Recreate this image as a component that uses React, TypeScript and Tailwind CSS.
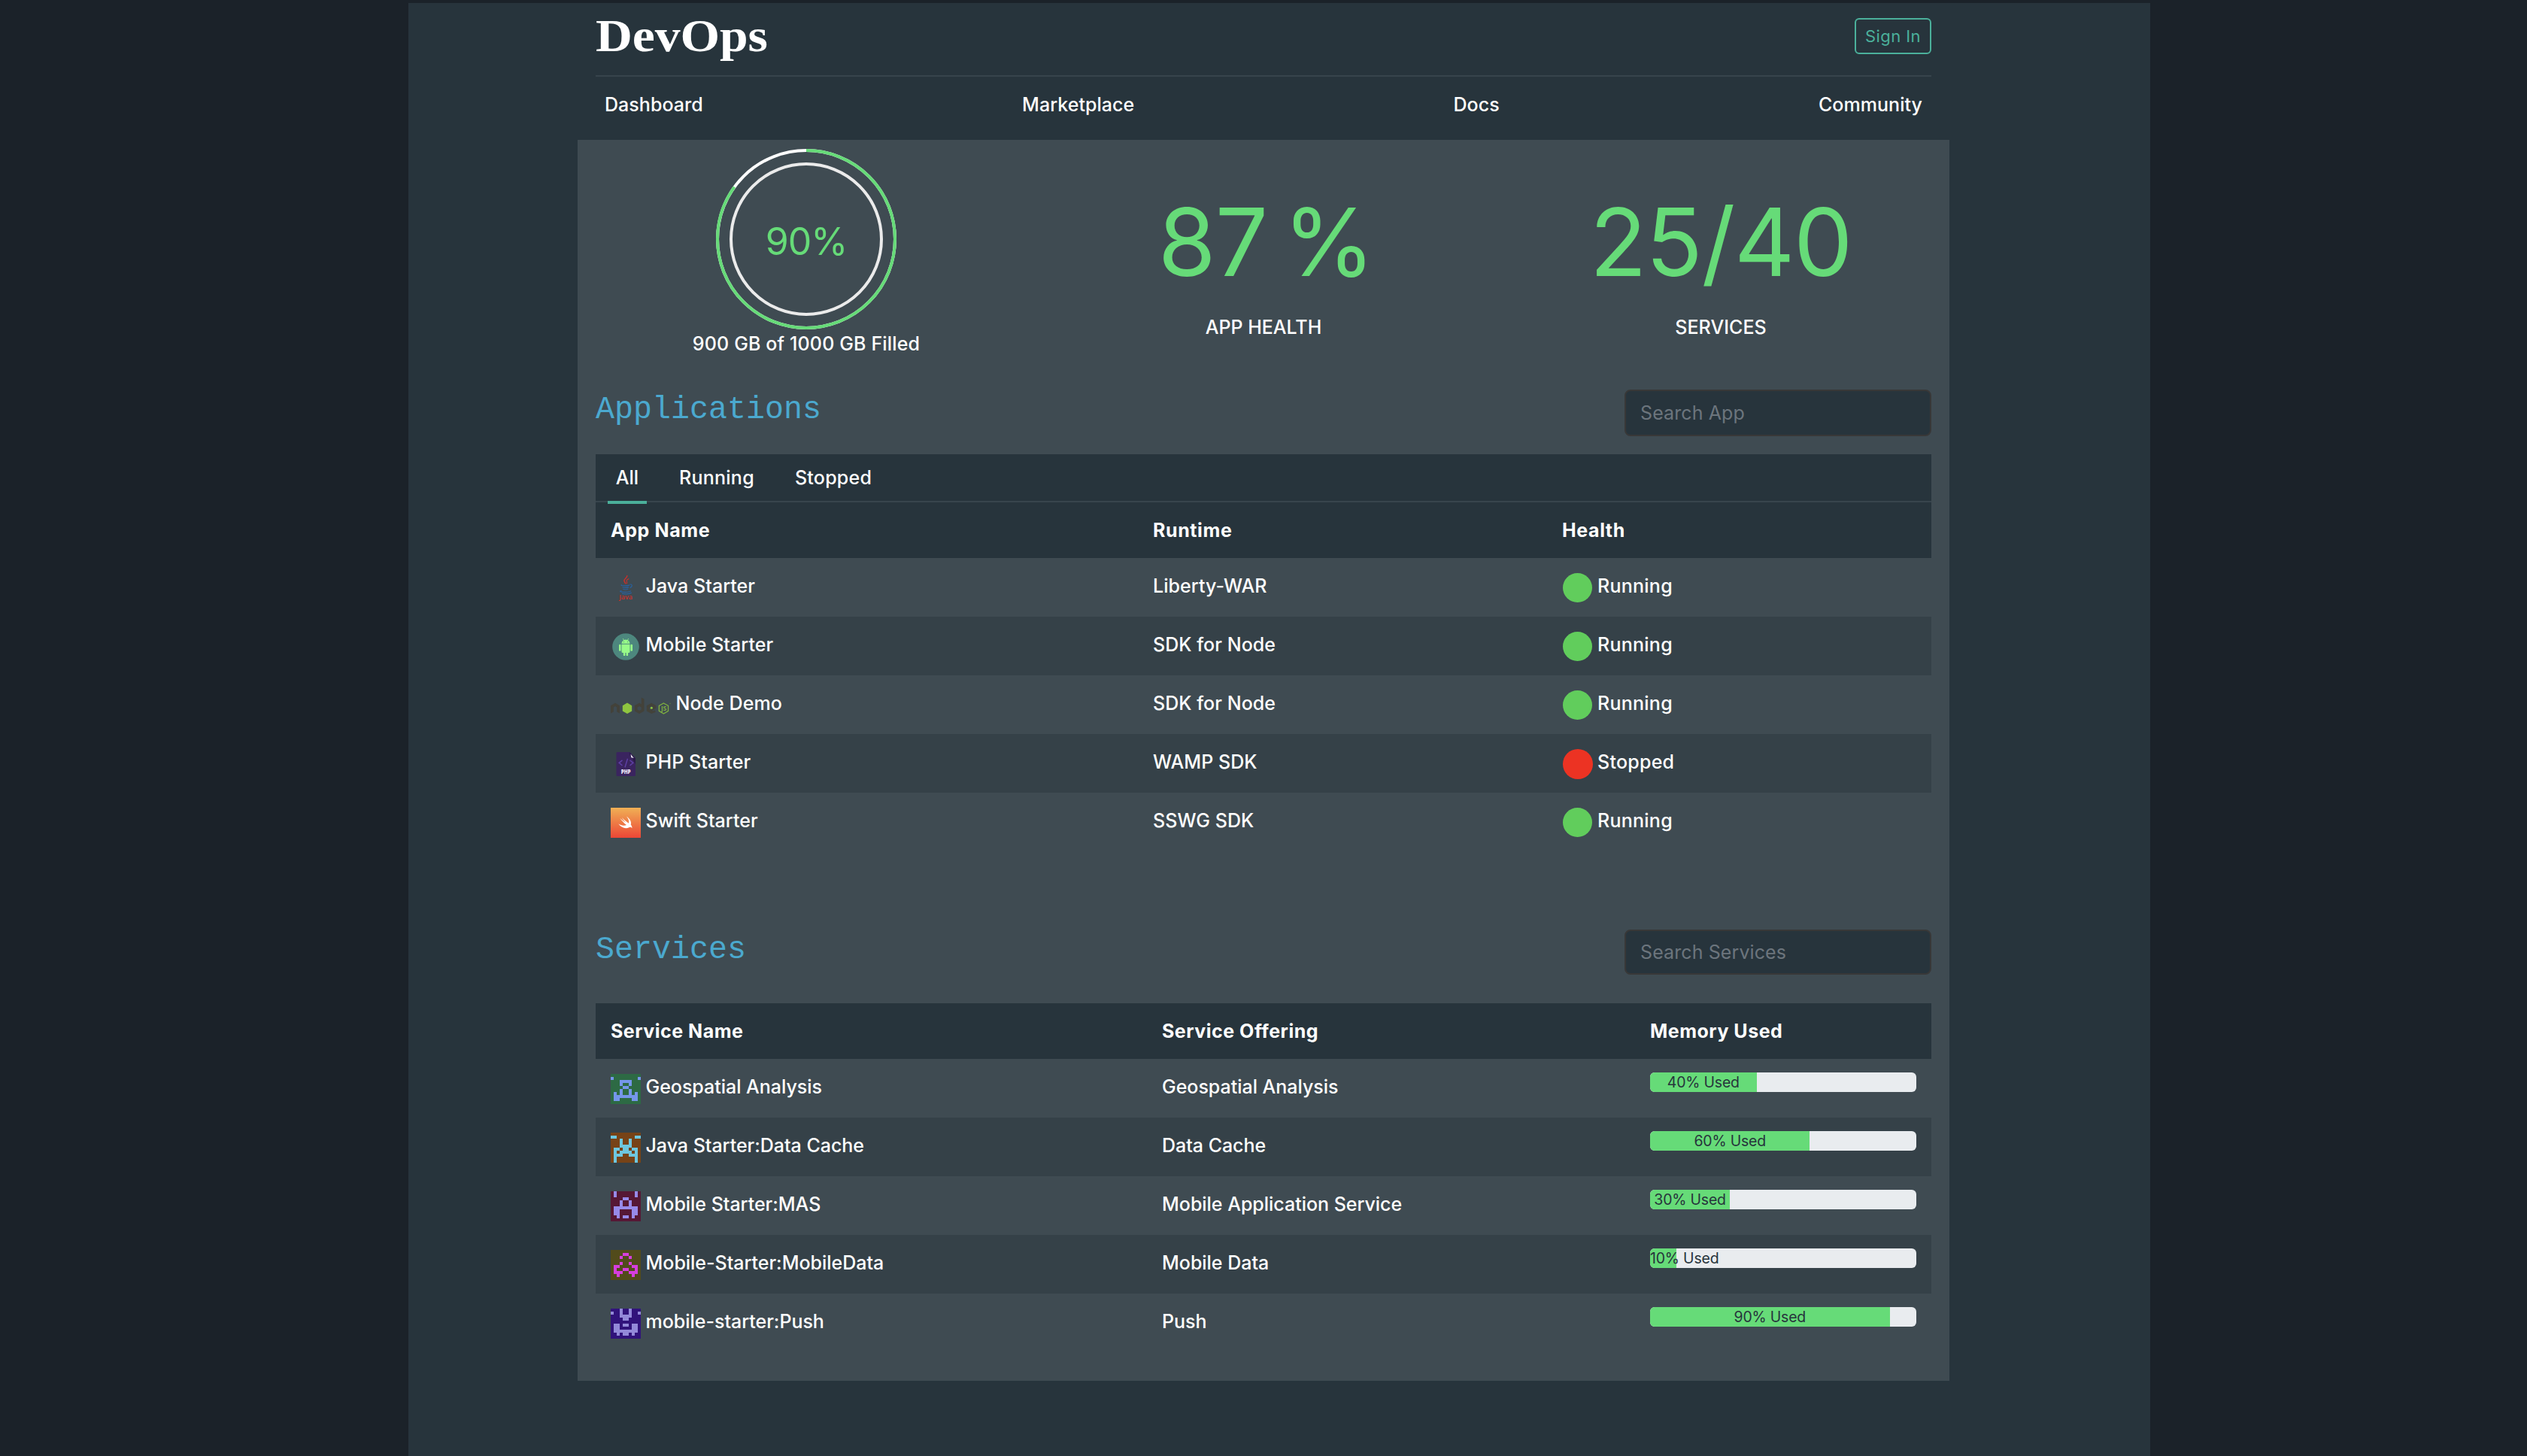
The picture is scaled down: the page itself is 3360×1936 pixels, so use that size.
import React from "react";

type IconKind = "java" | "android" | "node" | "php" | "swift";

const apps: { icon: IconKind; name: string; runtime: string; health: "Running" | "Stopped" }[] = [
  { icon: "java", name: "Java Starter", runtime: "Liberty-WAR", health: "Running" },
  { icon: "android", name: "Mobile Starter", runtime: "SDK for Node", health: "Running" },
  { icon: "node", name: "Node Demo", runtime: "SDK for Node", health: "Running" },
  { icon: "php", name: "PHP Starter", runtime: "WAMP SDK", health: "Stopped" },
  { icon: "swift", name: "Swift Starter", runtime: "SSWG SDK", health: "Running" },
];

interface Sprite {
  bg: string;
  fg: string;
  rows: string[];
}

const services: { name: string; offering: string; used: number; sprite: Sprite }[] = [
  {
    name: "Geospatial Analysis",
    offering: "Geospatial Analysis",
    used: 40,
    sprite: {
      bg: "#2d6a44",
      fg: "#7596ea",
      rows: [
        "..........",
        "#........#",
        "...####...",
        "...#..#...",
        "....##....",
        "...#..#...",
        ".#.#..#.#.",
        ".########.",
        ".##....##.",
        "..........",
      ],
    },
  },
  {
    name: "Java Starter:Data Cache",
    offering: "Data Cache",
    used: 60,
    sprite: {
      bg: "#774317",
      fg: "#6ec7df",
      rows: [
        "..........",
        "##......##",
        "...#..#...",
        "...#..#...",
        "...####...",
        ".##.##.##.",
        ".#.####.#.",
        ".###..###.",
        ".#......#.",
        ".#......#.",
      ],
    },
  },
  {
    name: "Mobile Starter:MAS",
    offering: "Mobile Application Service",
    used: 30,
    sprite: {
      bg: "#561835",
      fg: "#978ae9",
      rows: [
        ".#......#.",
        ".#......#.",
        "....##....",
        "...#..#...",
        "...#..#...",
        ".########.",
        ".##....##.",
        ".##....##.",
        "..#.##.#..",
        "..........",
      ],
    },
  },
  {
    name: "Mobile-Starter:MobileData",
    offering: "Mobile Data",
    used: 10,
    sprite: {
      bg: "#524b1b",
      fg: "#d63edd",
      rows: [
        "..........",
        "....##....",
        "...#..#...",
        "..........",
        "...#..#...",
        ".##....##.",
        ".#..##..#.",
        ".###..###.",
        "..#....#..",
        "..........",
      ],
    },
  },
  {
    name: "mobile-starter:Push",
    offering: "Push",
    used: 90,
    sprite: {
      bg: "#31137b",
      fg: "#9389d9",
      rows: [
        "...#..#...",
        "#..#..#..#",
        "...####...",
        "....##....",
        "..........",
        ".##.##.##.",
        ".##....##.",
        ".########.",
        "..#.##.#..",
        "..........",
      ],
    },
  },
];

function AppIcon({ kind }: { kind: IconKind }) {
  if (kind === "java")
    return (
      <svg className="mt-5 h-10 w-10 shrink-0" viewBox="0 0 40 40" fill="none">
        <path d="M21.8 3c1 3.400-4.600 4.600-3.800 7.600.4 1.500 1.700 2.400 2 3.800" stroke="#c8302b" strokeWidth="1.500" />
        <path d="M24.300 7.400c-2.700 1.200-4 2.400-2.900 4.100.6 1 .5 1.700-.3 2.600" stroke="#c8302b" strokeWidth="1.100" />
        <path d="M14.800 15.600c-1.500.6-1 1.300 4.200 1.300 3.200 0 5-.4 6-.8" stroke="#28619f" strokeWidth="1.200" />
        <path d="M25.300 15.200c3.600-.9 4.200 2.800.2 4.200" stroke="#28619f" strokeWidth="1.100" />
        <path d="M15.600 18.800c1.500.8 6.500.8 8.400.1M16.400 21.300c1.500.7 5 .7 6.800 0" stroke="#28619f" strokeWidth="1.200" />
        <path d="M14.500 23.500c-3.500.3-2.500 1.900 4.500 1.900 5.500 0 8.300-.9 7-1.900M15 27.400c4.500.7 10.500.4 12.800-1.400" stroke="#28619f" strokeWidth="1.100" />
        <text x="11.200" y="34.600" fill="#c8302b" fontSize="9.600" fontWeight="600" letterSpacing="0" fontFamily="Open Sans, sans-serif" textLength="17.600" lengthAdjust="spacingAndGlyphs">
          Java
        </text>
      </svg>
    );
  if (kind === "android")
    return (
      <svg className="mt-5 h-10 w-10 shrink-0" viewBox="0 0 40 40">
        <circle cx="20" cy="20" r="17.800" fill="#4d877e" />
        <g fill="#98fb89">
          <path d="M14.500 15.700a5.500 5.200 0 0 1 11 0z" />
          <path d="M16.300 9l1.600 2.700M23.700 9l-1.600 2.700" stroke="#98fb89" strokeWidth="0.800" />
          <path d="M14.500 16.700h11v9.800a1.500 1.500 0 0 1-1.500 1.500h-8a1.500 1.500 0 0 1-1.500-1.500z" />
          <rect x="11" y="16.800" width="2.600" height="9" rx="1.300" />
          <rect x="26.400" y="16.800" width="2.600" height="9" rx="1.300" />
          <rect x="16.900" y="26" width="2.500" height="6.100" rx="1.200" />
          <rect x="20.600" y="26" width="2.500" height="6.100" rx="1.200" />
        </g>
        <circle cx="17.500" cy="13.500" r="0.600" fill="#4d877e" />
        <circle cx="22.500" cy="13.500" r="0.600" fill="#4d877e" />
      </svg>
    );
  if (kind === "node")
    return (
      <svg className="mt-5 h-10 w-20 shrink-0" viewBox="0 0 80 40">
        <g fill="#43423a">
          <path d="M0 30.600V20.300l6-3.600 6 3.600v10.300l-3.800-2.200v-6L6 21l-2.200 1.400v6z" />
          <path
            fillRule="evenodd"
            d="M38.100 16.700l2.700 1.500V9.500l3.700 2v16l-6.400 3.600-6.300-3.600v-7.200zM38.100 21l-2.600 1.500v2.900l2.600 1.500 2.700-1.500v-2.900z"
          />
          <path d="M54.200 16.700l6.200 3.600v3.300l-5.200 3.200 1.200.7 2.200-1.200 1.300 2.500-5.700 2.300-6.300-3.600v-7.200zm0 4.200l-2.700 1.500v3l1 .6 4.700-3.400z" fillRule="evenodd" />
        </g>
        <path d="M22 16.600l6.200 3.600v7.300L22 31.100l-6.200-3.600v-7.300z" fill="#8fc640" />
        <circle cx="54.300" cy="23.300" r="1.500" fill="#8fc640" />
        <path d="M70.400 17l6.100 3.500v6.900L70.400 31l-6.100-3.600v-6.900z" fill="none" stroke="#7dae40" strokeWidth="1.300" />
        <text x="67" y="27.300" fill="#7dae40" fontSize="9" fontWeight="700" letterSpacing="0" fontFamily="Open Sans, sans-serif" textLength="7.200" lengthAdjust="spacingAndGlyphs">
          JS
        </text>
        <circle cx="79" cy="17.500" r="0.700" fill="#5f8340" />
      </svg>
    );
  if (kind === "php")
    return (
      <svg className="mt-5 h-10 w-10 shrink-0" viewBox="0 0 40 40">
        <path d="M9 4h16.500l7.500 8v22.500a1.500 1.500 0 0 1-1.500 1.500H9a1.500 1.500 0 0 1-1.500-1.500v-29A1.500 1.500 0 0 1 9 4z" fill="#3a245f" />
        <path d="M24.500 4L33 12.500V20c-2.500-3.500-3.500-6-4-8-2-.5-3.500-3-4.500-8z" fill="#2b1a49" />
        <path d="M26.600 6.800l4.200 5.200-3.600-.7z" fill="#e9e6ef" />
        <path d="M15.500 14.800l-4.400 3.500 4.400 3.500M25.500 14.800l4.400 3.500-4.400 3.500M22.500 12.800l-3.500 11.400" fill="none" stroke="#5d3fa3" strokeWidth="1.500" />
        <text x="13.800" y="33.400" fill="#eee8f8" fontSize="8" fontWeight="800" letterSpacing="0" fontFamily="Open Sans, sans-serif" textLength="12.800" lengthAdjust="spacingAndGlyphs">
          PHP
        </text>
      </svg>
    );
  return (
    <svg className="mt-5 h-10 w-10 shrink-0" viewBox="0 0 40 40">
      <defs>
        <linearGradient id="swift-bg" x1="0" y1="0" x2="0" y2="1">
          <stop offset="0" stopColor="#f0b055" />
          <stop offset="1" stopColor="#ec4636" />
        </linearGradient>
      </defs>
      <rect width="40" height="40" fill="url(#swift-bg)" />
      <path
        fill="#fff"
        d="M21 11.500C26 15 28 19 26.700 22.500c1.800 2 1.900 4 1.500 4.700-1.200-1.900-2.900-1.600-3.900-1C20 28.500 13.500 26.500 10.300 21.300c3.200 2.500 7.700 3.300 10.700 1.700-3.500-2.500-6.500-6-8.700-9.200 2.500 2.200 5.200 4.400 7.700 6-1.800-2-3.800-4.600-5.200-6.800 3 3 6.200 5.700 9.200 7.700.7-3.200-.5-6.200-3-9.200z"
      />
    </svg>
  );
}

function SpriteIcon({ sprite }: { sprite: Sprite }) {
  return (
    <svg className="mt-5 h-10 w-10 shrink-0" viewBox="0 0 10 10" shapeRendering="crispEdges">
      <rect width="10" height="10" fill={sprite.bg} />
      {sprite.rows.flatMap((row, y) =>
        row.split("").map((c, x) => (c === "#" ? <rect key={`${x}-${y}`} x={x} y={y} width="1" height="1" fill={sprite.fg} /> : null))
      )}
    </svg>
  );
}

function SectionHead({ title, placeholder, className, inputClass }: { title: string; placeholder: string; className: string; inputClass: string }) {
  return (
    <div className={`flex items-start justify-between ${className}`}>
      <h2 className="font-['Liberation_Mono',monospace] text-[41.6px] leading-[54px] tracking-[0.03px] text-[#4ba9cf]">{title}</h2>
      <input
        className={`w-[408px] rounded-lg border-2 border-[#383838] bg-[#27343c] pl-[19px] font-normal tracking-[0.1px] outline-none placeholder:text-[#6c757d] placeholder:opacity-100 ${inputClass}`}
        placeholder={placeholder}
      />
    </div>
  );
}

function Gauge() {
  return (
    <div className="relative mt-3 h-60 w-60">
      <svg className="h-60 w-60" viewBox="0 0 240 240" fill="none">
        <circle cx="120" cy="120" r="118" stroke="#ffffff" strokeWidth="4" />
        <circle cx="120" cy="120" r="118" stroke="#66db78" strokeWidth="4" pathLength="100" strokeDasharray="85 100" transform="rotate(-90 120 120)" />
        <circle cx="120" cy="120" r="100" stroke="#ebebeb" strokeWidth="4" />
      </svg>
      <div className="absolute inset-x-0 top-[93px] text-center text-[50px] leading-[60px] font-normal tracking-[-1.1px] text-[#66db78]">90%</div>
    </div>
  );
}

export default function App() {
  return (
    <div className="h-[1936px] w-full overflow-hidden bg-[#1b2229] pt-1 font-['Inter',sans-serif] text-[25px] font-[450] tracking-[0.05px] text-white">
      <div className="ml-[543px] h-full w-[2316px] bg-[#27343c] pl-[225px]">
        <div className="w-[1824px]">
          <div className="px-6">
            <header className="flex h-24 items-start justify-between">
              <h1 className="origin-left scale-x-[1.1] font-['Liberation_Serif',serif] text-[61.5px] leading-[86px] font-bold tracking-[-0.1px]">DevOps</h1>
              <button className="mt-5 h-12 w-[102px] rounded-md border-2 border-[#4bb09b] text-[22px] leading-[42px] font-normal tracking-[0.4px] text-[#4bb09b]">
                Sign In
              </button>
            </header>
            <nav className="flex h-[86px] justify-between border-t-2 border-[#37444c] px-[12px] leading-[74px]">
              <a>Dashboard</a>
              <a>Marketplace</a>
              <a>Docs</a>
              <a>Community</a>
            </nav>
          </div>

          <main className="h-[1650px] bg-[#3f4b52] px-6">
            <section className="-mx-6 grid h-[332px] grid-cols-3">
              <div className="flex flex-col items-center">
                <Gauge />
                <p className="leading-[38px] tracking-[0.15px]">900 GB of 1000 GB Filled</p>
              </div>
              <div className="flex flex-col items-center pt-9">
                <p className="pl-[7px] text-[124.500px] leading-[200px] font-normal tracking-[-1px] text-[#66db78] [word-spacing:-13px]">87 %</p>
                <p className="leading-[26px] tracking-[0px]">APP HEALTH</p>
              </div>
              <div className="flex flex-col items-center pt-9">
                <p className="text-[124.500px] leading-[200px] font-normal tracking-[-1.4px] text-[#66db78]">25/40</p>
                <p className="leading-[26px]">SERVICES</p>
              </div>
            </section>

            <SectionHead title="Applications" placeholder="Search App" className="h-[86px]" inputClass="h-[62px]" />
            <div className="relative z-10 flex h-16 gap-[2px] border-b-2 border-[#38454d] bg-[#27343c] pl-4 leading-[62px]">
              <button className="h-[66px] w-[52px] border-b-4 border-[#4bb09b] text-center tracking-normal">All</button>
              <button className="ml-[41px] tracking-[0.25px]">Running</button>
              <button className="ml-[52px] tracking-[0.25px]">Stopped</button>
            </div>
            <div className="grid h-[74px] grid-cols-[721px_544px_1fr] bg-[#27343c] pl-5 leading-[74px] font-bold tracking-[0.6px]">
              <span>App Name</span>
              <span>Runtime</span>
              <span>Health</span>
            </div>
            {apps.map((a, i) => (
              <div
                key={a.name}
                className={`grid h-[78px] grid-cols-[721px_544px_1fr] pl-5 leading-[74px] ${i % 2 ? "bg-[#354148]" : "bg-[#3f4b52]"}`}
              >
                <div className="flex gap-[6.5px]">
                  <AppIcon kind={a.icon} />
                  <span>{a.name}</span>
                </div>
                <span>{a.runtime}</span>
                <div className="flex gap-[7px] pl-px">
                  {a.health === "Running" ? (
                    <span className="mt-5 h-[39px] w-[39px] rounded-full bg-[#61cd5c]" />
                  ) : (
                    <span className="mt-5 -mr-px h-10 w-10 rounded-full bg-[#ec3323]" />
                  )}
                  <span className="tracking-[0.25px]">{a.health}</span>
                </div>
              </div>
            ))}

            <SectionHead title="Services" placeholder="Search Services" className="mt-[104px] h-[98px]" inputClass="h-[60px]" />
            <div className="grid h-[74px] grid-cols-[733px_649px_1fr] bg-[#27343c] pl-5 leading-[74px] font-bold tracking-[0.5px]">
              <span>Service Name</span>
              <span>Service Offering</span>
              <span>Memory Used</span>
            </div>
            {services.map((s, i) => (
              <div
                key={s.name}
                className={`grid h-[78px] grid-cols-[733px_649px_1fr] px-5 leading-[74px] tracking-[-0.02px] ${i % 2 ? "bg-[#354148]" : "bg-[#3f4b52]"}`}
              >
                <div className="flex gap-[6.5px]">
                  <SpriteIcon sprite={s.sprite} />
                  <span>{s.name}</span>
                </div>
                <span>{s.offering}</span>
                <div className="mt-[18px] h-[26px] overflow-hidden rounded-[6px] bg-[#e9ecef]">
                  <div
                    className={`flex h-full bg-[#66db78] text-[19.5px] leading-[26px] font-normal tracking-[-0.2px] whitespace-nowrap text-[#27343c] ${s.used > 20 ? "justify-center" : "justify-start"}`}
                    style={{ width: `${s.used}%` }}
                  >
                    {s.used}% Used
                  </div>
                </div>
              </div>
            ))}
          </main>
        </div>
      </div>
    </div>
  );
}
